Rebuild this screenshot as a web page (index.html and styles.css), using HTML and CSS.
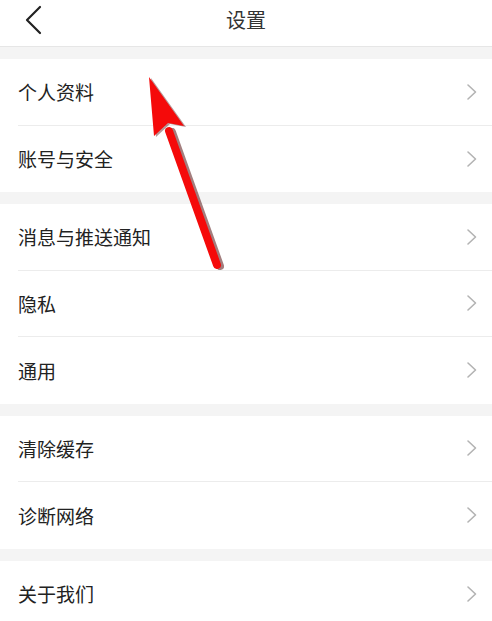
FILE: index.html
```html
<!DOCTYPE html>
<html lang="zh">
<head>
<meta charset="utf-8">
<link rel="stylesheet" href="styles.css">
</head>
<body>
<div class="page">
  <header class="topbar">
    <svg class="back" width="20" height="30" viewBox="0 0 20 30"><path d="M16 2 L3 15 L16 28" fill="none" stroke="#222" stroke-width="2.2" stroke-linecap="round" stroke-linejoin="round"/></svg>
    <div class="title">设置</div>
  </header>
  <div class="gap"></div>
  <section class="group">
    <div class="row"><span class="label">个人资料</span><svg class="chev" width="12" height="18" viewBox="0 0 12 18"><path d="M2 2 L9.5 9 L2 16" fill="none" stroke="#b3b3b3" stroke-width="1.6" stroke-linecap="round" stroke-linejoin="round"/></svg></div>
    <div class="row"><span class="label">账号与安全</span><svg class="chev" width="12" height="18" viewBox="0 0 12 18"><path d="M2 2 L9.5 9 L2 16" fill="none" stroke="#b3b3b3" stroke-width="1.6" stroke-linecap="round" stroke-linejoin="round"/></svg></div>
  </section>
  <div class="gap"></div>
  <section class="group">
    <div class="row"><span class="label">消息与推送通知</span><svg class="chev" width="12" height="18" viewBox="0 0 12 18"><path d="M2 2 L9.5 9 L2 16" fill="none" stroke="#b3b3b3" stroke-width="1.6" stroke-linecap="round" stroke-linejoin="round"/></svg></div>
    <div class="row"><span class="label">隐私</span><svg class="chev" width="12" height="18" viewBox="0 0 12 18"><path d="M2 2 L9.5 9 L2 16" fill="none" stroke="#b3b3b3" stroke-width="1.6" stroke-linecap="round" stroke-linejoin="round"/></svg></div>
    <div class="row"><span class="label">通用</span><svg class="chev" width="12" height="18" viewBox="0 0 12 18"><path d="M2 2 L9.5 9 L2 16" fill="none" stroke="#b3b3b3" stroke-width="1.6" stroke-linecap="round" stroke-linejoin="round"/></svg></div>
  </section>
  <div class="gap"></div>
  <section class="group">
    <div class="row"><span class="label">清除缓存</span><svg class="chev" width="12" height="18" viewBox="0 0 12 18"><path d="M2 2 L9.5 9 L2 16" fill="none" stroke="#b3b3b3" stroke-width="1.6" stroke-linecap="round" stroke-linejoin="round"/></svg></div>
    <div class="row"><span class="label">诊断网络</span><svg class="chev" width="12" height="18" viewBox="0 0 12 18"><path d="M2 2 L9.5 9 L2 16" fill="none" stroke="#b3b3b3" stroke-width="1.6" stroke-linecap="round" stroke-linejoin="round"/></svg></div>
  </section>
  <div class="gap"></div>
  <section class="group">
    <div class="row"><span class="label">关于我们</span><svg class="chev" width="12" height="18" viewBox="0 0 12 18"><path d="M2 2 L9.5 9 L2 16" fill="none" stroke="#b3b3b3" stroke-width="1.6" stroke-linecap="round" stroke-linejoin="round"/></svg></div>
  </section>
  <svg class="arrow" width="492" height="621" viewBox="0 0 492 621">
    <line x1="172" y1="132" x2="220" y2="266" stroke="#4a0000" stroke-width="8" stroke-linecap="round" opacity="0.5"/>
    <line x1="169" y1="131" x2="217" y2="265" stroke="#f50a0a" stroke-width="8" stroke-linecap="round"/>
    <polygon points="149,77 184,126 168,123 154,136" fill="#4a0000" opacity="0.4" transform="translate(2,1)"/>
    <polygon points="149,77 184,126 168,123 154,136" fill="#f50a0a"/>
  </svg>
</div>
</body>
</html>
```
FILE: styles.css
```css
* { box-sizing: border-box; }
html, body { margin: 0; padding: 0; background: #ffffff; }
body { font-family: "Noto Sans CJK SC", "Noto Sans", sans-serif; }
.page { position: relative; width: 492px; height: 621px; overflow: hidden; background: #f4f4f4; display: flex; flex-direction: column; }
.topbar { height: 47px; flex: none; background: #fff; border-bottom: 1px solid #e6e6e6; display: flex; align-items: center; justify-content: center; position: relative; }
.back { position: absolute; left: 24px; top: 5px; }
.title { font-size: 20px; color: #333; line-height: 1; margin-top: -6px; }
.gap { height: 12px; flex: none; background: #f4f4f4; }
.group { background: #fff; flex: none; padding-left: 18px; }
.row { height: 66.5px; display: flex; align-items: center; justify-content: space-between; border-bottom: 1px solid #ececec; padding-right: 14px; }
.row:last-child { border-bottom: none; }
.label { font-size: 19px; color: #222; line-height: 1; }
.chev { flex: none; }
.arrow { position: absolute; left: 0; top: 0; pointer-events: none; }
```
